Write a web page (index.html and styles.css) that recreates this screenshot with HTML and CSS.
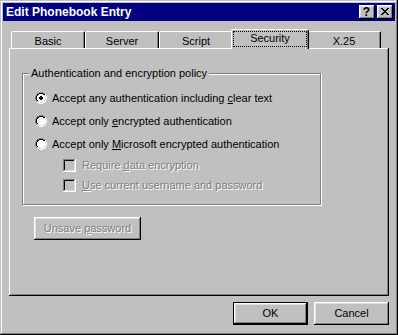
FILE: index.html
```html
<!DOCTYPE html>
<html>
<head>
<meta charset="utf-8">
<title>Edit Phonebook Entry</title>
<link rel="stylesheet" href="styles.css">
</head>
<body>
<svg class="defs" width="0" height="0" aria-hidden="true">
  <defs>
    <symbol id="radio" viewBox="0 0 12 12">
      <path fill="#808080" d="M4 0h4v1h-4z M2 1h2v1h-2z M8 1h2v1h-2z M1 2h1v2h-1z M0 4h1v4h-1z M1 8h1v2h-1z"/>
      <path fill="#000" d="M4 1h4v1h-4z M2 2h2v1h-2z M8 2h2v1h-2z M2 3h1v1h-1z M1 4h1v4h-1z M2 8h1v1h-1z"/>
      <path fill="#dfdfdf" d="M9 3h1v1h-1z M10 4h1v4h-1z M9 8h1v1h-1z M2 9h2v1h-2z M8 9h2v1h-2z M4 10h4v1h-4z"/>
      <path fill="#fff" d="M10 2h1v2h-1z M11 4h1v4h-1z M10 8h1v2h-1z M2 10h2v1h-2z M8 10h2v1h-2z M4 11h4v1h-4z M4 2h4v1h-4z M3 3h6v1h-6z M2 4h8v4h-8z M3 8h6v1h-6z M4 9h4v1h-4z"/>
    </symbol>
  </defs>
</svg>
<div class="window">
  <div class="titlebar">
    <span class="title">Edit Phonebook Entry</span>
    <div class="tb-buttons">
      <div class="tb-btn help">?</div>
      <div class="tb-btn close">
        <svg width="8" height="7" viewBox="0 0 8 7" shape-rendering="crispEdges"><path fill="#000" d="M0 0h2v1h-2z M6 0h2v1h-2z M1 1h2v1h-2z M5 1h2v1h-2z M2 2h4v1h-4z M3 3h2v1h-2z M2 4h4v1h-4z M1 5h2v1h-2z M5 5h2v1h-2z M0 6h2v1h-2z M6 6h2v1h-2z"/></svg>
      </div>
    </div>
  </div>
  <div class="tabs">
    <div class="tab">Basic</div>
    <div class="tab">Server</div>
    <div class="tab">Script</div>
    <div class="tab active"><span class="focus">Security</span></div>
    <div class="tab">X.25</div>
  </div>
  <div class="panel">
    <div class="group">
      <div class="legend">Authentication and encryption policy</div>
      <div class="opt first">
        <svg class="radio" viewBox="0 0 12 12" shape-rendering="crispEdges"><use href="#radio"/><path fill="#000" d="M5 4h2v1h-2z M4 5h4v2h-4z M5 7h2v1h-2z"/></svg>
        <span>Accept any authentication including <u>c</u>lear text</span>
      </div>
      <div class="opt">
        <svg class="radio" viewBox="0 0 12 12" shape-rendering="crispEdges"><use href="#radio"/></svg>
        <span>Accept only <u>e</u>ncrypted authentication</span>
      </div>
      <div class="opt">
        <svg class="radio" viewBox="0 0 12 12" shape-rendering="crispEdges"><use href="#radio"/></svg>
        <span>Accept only <u>M</u>icrosoft encrypted authentication</span>
      </div>
      <div class="chk first-chk">
        <span class="box"></span>
        <span class="disabled">Require <u>d</u>ata encryption</span>
      </div>
      <div class="chk">
        <span class="box"></span>
        <span class="disabled"><u>U</u>se current username and password</span>
      </div>
    </div>
    <div class="btn unsave"><span class="disabled">Unsave <u>p</u>assword</span></div>
  </div>
  <div class="actions">
    <div class="btn default">OK</div>
    <div class="btn">Cancel</div>
  </div>
</div>
</body>
</html>
```
FILE: styles.css
```css
* { box-sizing: border-box; }
html, body { margin: 0; padding: 0; background: #c0c0c0; }
body {
  font-family: "Liberation Sans", Arial, sans-serif;
  font-size: 11px;
  color: #000;
}
.defs { position: absolute; width: 0; height: 0; overflow: hidden; }

.window {
  width: 398px;
  height: 335px;
  padding: 3px;
  background: #c0c0c0;
  box-shadow: inset -1px -1px #000, inset 1px 1px #c0c0c0, inset -2px -2px #808080, inset 2px 2px #fff;
  display: flex;
  flex-direction: column;
}

.titlebar {
  height: 18px;
  background: #000080;
  color: #fff;
  display: flex;
  align-items: center;
  justify-content: space-between;
  padding: 0 2px 0 3px;
}
.title { font-weight: bold; font-size: 12px; line-height: 18px; }
.tb-buttons { display: flex; gap: 2px; }
.tb-btn {
  width: 16px;
  height: 14px;
  background: #c0c0c0;
  color: #000;
  box-shadow: inset -1px -1px #000, inset 1px 1px #fff, inset -2px -2px #808080, inset 2px 2px #dfdfdf;
}
.help { font-weight: bold; font-size: 12px; line-height: 14px; text-align: center; padding-right: 1px; }
.close { padding: 3px 0 0 4px; }
.close svg { display: block; }

.tabs {
  display: flex;
  align-items: flex-end;
  margin: 8px 0 0 8px;
}
.tab {
  width: 74px;
  height: 17px;
  padding-top: 3px;
  line-height: 13px;
  text-align: center;
  background: #c0c0c0;
  border-left: 1px solid #fff;
  border-top: 1px solid #fff;
  border-right: 1px solid #000;
  border-radius: 2px 2px 0 0;
  box-shadow: inset -1px 0 #808080;
}
.tab.active {
  width: 78px;
  height: 20px;
  margin: 0 -2px -1px;
  padding: 1px 1px 0 1px;
  position: relative;
  z-index: 1;
}
.focus {
  display: block;
  height: 16px;
  border: 1px dotted #000;
  line-height: 13px;
}

.panel {
  height: 248px;
  margin: 0 6px;
  padding: 25px 0 0 13px;
  box-shadow: inset -1px -1px #000, inset 1px 1px #fff, inset -2px -2px #808080;
}

.group {
  width: 299px;
  border: 1px solid #808080;
  box-shadow: inset 1px 1px #fff, 1px 1px #fff;
  padding: 0 12px 12px 12px;
}
.legend {
  width: fit-content;
  margin: -7px 0 0 -6px;
  padding: 0 2px;
  line-height: 13px;
  background: #c0c0c0;
}
.opt {
  display: flex;
  align-items: center;
  gap: 5px;
  height: 12px;
  line-height: 12px;
  margin-top: 11px;
}
.opt.first { margin-top: 12px; }
.radio { width: 12px; height: 12px; display: block; flex-shrink: 0; }

.chk {
  display: flex;
  align-items: center;
  gap: 6px;
  height: 13px;
  line-height: 13px;
  margin: 7px 0 0 28px;
}
.chk.first-chk { margin-top: 9px; }
.box {
  width: 13px;
  height: 13px;
  flex-shrink: 0;
  background: #c0c0c0;
  box-shadow: inset -1px -1px #fff, inset 1px 1px #808080, inset -2px -2px #dfdfdf, inset 2px 2px #000;
}
.disabled { color: #808080; text-shadow: 1px 1px 0 #fff; }

.btn {
  width: 75px;
  height: 23px;
  display: flex;
  align-items: center;
  justify-content: center;
  line-height: 13px;
  background: #c0c0c0;
  box-shadow: inset -1px -1px #000, inset 1px 1px #fff, inset -2px -2px #808080, inset 2px 2px #dfdfdf;
}
.btn.default {
  box-shadow: inset 0 0 0 1px #000, inset -2px -2px #000, inset 2px 2px #fff, inset -3px -3px #808080, inset 3px 3px #dfdfdf;
}
.btn.unsave {
  width: 107px;
  margin: 12px 0 0 12px;
}

.actions {
  display: flex;
  justify-content: flex-end;
  gap: 6px;
  margin: 6px 6px 0 0;
}
```
